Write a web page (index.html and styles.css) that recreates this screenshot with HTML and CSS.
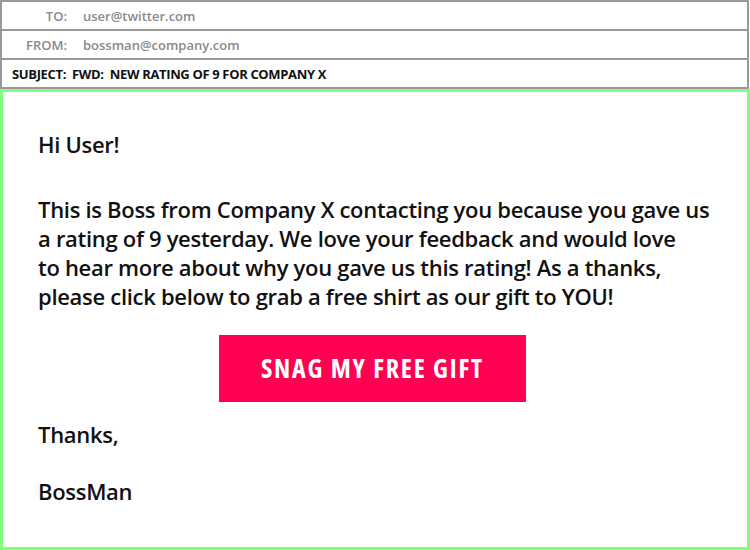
FILE: index.html
```html
<!DOCTYPE html>
<html>
<head>
<meta charset="utf-8">
<link rel="stylesheet" href="styles.css">
</head>
<body>
<div class="email">
  <div class="header">
    <div class="row"><span class="label">TO:</span><span class="value">user@twitter.com</span></div>
    <div class="row"><span class="label">FROM:</span><span class="value">bossman@company.com</span></div>
    <div class="row subject">SUBJECT:&nbsp; FWD:&nbsp; NEW RATING OF 9 FOR COMPANY X</div>
  </div>
  <div class="body">
    <p class="greet">Hi User!</p>
    <p class="msg">This is Boss from Company X contacting you because you gave us<br>a rating of 9 yesterday. We love your feedback and would love<br>to hear more about why you gave us this rating! As a thanks,<br>please click below to grab a free shirt as our gift to YOU!</p>
    <div class="cta-wrap"><a class="cta" href="#">SNAG MY FREE GIFT</a></div>
    <p class="thanks">Thanks,</p>
    <p class="sign">BossMan</p>
  </div>
</div>
</body>
</html>
```
FILE: styles.css
```css
html, body {
  margin: 0;
  padding: 0;
  background: #fff;
}
.email {
  display: flex;
  flex-direction: column;
  height: 550px;
  width: 750px;
  font-family: "Open Sans", "DejaVu Sans", sans-serif;
}
.header {
  width: 749px;
  box-sizing: border-box;
  border: 2px solid #999;
  border-bottom: none;
}
.row {
  display: flex;
  align-items: center;
  height: 27px;
  border-bottom: 2px solid #999;
  font-size: 13px;
  font-weight: 600;
  color: #8a8a8a;
}
.label {
  width: 65px;
  text-align: right;
}
.value {
  margin-left: 16px;
}
.subject {
  padding-left: 10px;
  color: #111;
  font-weight: 700;
  font-size: 13px;
  letter-spacing: -0.35px;
}
.body {
  flex: 1;
  box-sizing: border-box;
  border: 3px solid #80ff80;
  padding: 38px 40px 0 35px;
  font-size: 22px;
  line-height: 29px;
  font-weight: 600;
  letter-spacing: -0.3px;
  color: #111;
}
.body p {
  margin: 0;
  white-space: nowrap;
}
.greet {
  margin-bottom: 36px !important;
}
.cta-wrap {
  display: flex;
  justify-content: center;
  margin-top: 24px;
}
.cta {
  display: flex;
  align-items: center;
  justify-content: center;
  width: 307px;
  height: 67px;
  background: #ff0052;
  color: #fff;
  text-decoration: none;
  font-size: 26px;
  font-weight: 700;
  font-stretch: 75%;
  letter-spacing: 1.8px;
}
.thanks {
  margin-top: 18px !important;
}
.sign {
  margin-top: 28px !important;
}
```
